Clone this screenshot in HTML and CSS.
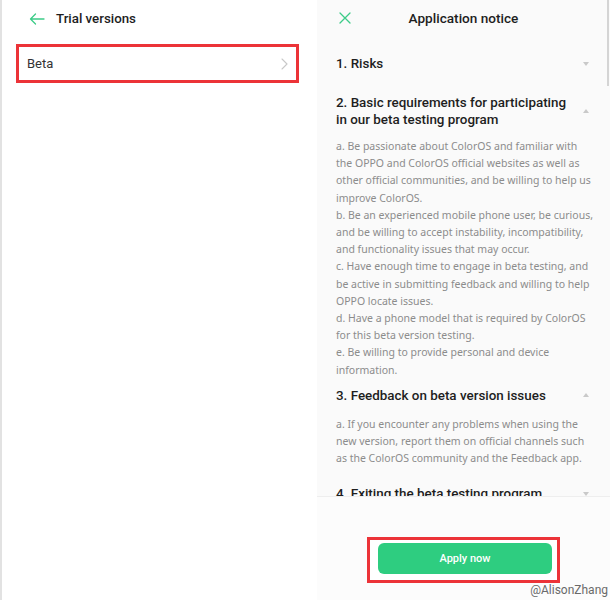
FILE: index.html
```html
<!DOCTYPE html>
<html lang="en">
<head>
    <meta charset="UTF-8">
    <meta name="viewport" content="width=device-width, initial-scale=1.0">
    <title>Trial versions</title>
    <link rel="stylesheet" href="styles.css">
</head>
<body>
    <div class="screens">
        <!-- Left screen: trial versions list -->
        <section class="screen screen-list">
            <header class="list-header">
                <svg class="back-icon" width="16" height="12" viewBox="0 0 16 12">
                    <path d="M15 6H1.5M6.5 1L1.5 6l5 5" fill="none" stroke="#3ccb88" stroke-width="1.3" stroke-linecap="round" stroke-linejoin="round"/>
                </svg>
                <h1>Trial versions</h1>
            </header>

            <div class="mark">
                <div class="list-row">
                    <span>Beta</span>
                    <svg width="7" height="12" viewBox="0 0 7 12">
                        <path d="M1 1l5 5-5 5" fill="none" stroke="#c8c8c8" stroke-width="1.1" stroke-linecap="round" stroke-linejoin="round"/>
                    </svg>
                </div>
            </div>
        </section>

        <!-- Right screen: application notice -->
        <section class="screen screen-notice">
            <header class="notice-header">
                <span class="close-cell">
                    <svg width="12" height="12" viewBox="0 0 12 12">
                        <path d="M1 1l10 10M11 1L1 11" fill="none" stroke="#3ccb88" stroke-width="1.3" stroke-linecap="round"/>
                    </svg>
                </span>
                <h2>Application notice</h2>
                <span></span>
            </header>

            <div class="notice-body">
                <div class="item item-risks">
                    <div class="item-head">
                        <span>1. Risks</span>
                        <i class="caret caret-down"></i>
                    </div>
                </div>

                <div class="item item-basic">
                    <div class="item-head">
                        <span>2. Basic requirements for participating in our beta testing program</span>
                        <i class="caret caret-up"></i>
                    </div>
                    <p class="item-text">
                        a. Be passionate about ColorOS and familiar with the OPPO and ColorOS official websites as well as other official communities, and be willing to help us improve ColorOS.<br>
                        b. Be an experienced mobile phone user, be curious, and be willing to accept instability, incompatibility, and functionality issues that may occur.<br>
                        c. Have enough time to engage in beta testing, and be active in submitting feedback and willing to help OPPO locate issues.<br>
                        d. Have a phone model that is required by ColorOS for this beta version testing.<br>
                        e. Be willing to provide personal and device information.
                    </p>
                </div>

                <div class="item item-feedback">
                    <div class="item-head">
                        <span>3. Feedback on beta version issues</span>
                        <i class="caret caret-up"></i>
                    </div>
                    <p class="item-text">
                        a. If you encounter any problems when using the new version, report them on official channels such as the ColorOS community and the Feedback app.
                    </p>
                </div>

                <div class="item">
                    <div class="item-head">
                        <span>4. Exiting the beta testing program</span>
                        <i class="caret caret-down"></i>
                    </div>
                </div>
            </div>

            <footer class="notice-footer">
                <div class="mark mark-button">
                    <button class="apply-btn">Apply now</button>
                </div>
            </footer>

            <div class="scroll-thumb"></div>
            <div class="watermark">@AlisonZhang</div>
        </section>
    </div>
</body>
</html>
```

FILE: styles.css
```css
* {
    margin: 0;
    padding: 0;
    box-sizing: border-box;
}

body {
    font-family: Roboto, 'Noto Sans', sans-serif;
    background: #ffffff;
    color: #222222;
    width: 610px;
    height: 600px;
    overflow: hidden;
}

.screens {
    display: flex;
    height: 600px;
}

.screen {
    height: 600px;
}

/* left screen */
.screen-list {
    width: 317px;
    background: #ffffff;
    border-left: 2px solid #e2e2e2;
}

.list-header {
    height: 37px;
    display: flex;
    align-items: center;
    gap: 11px;
    padding-left: 27px;
}

.list-header h1 {
    font-size: 13.3px;
    font-weight: 500;
    color: #1e1e1e;
}

.mark {
    border: 3px solid #ec3338;
}

.screen-list .mark {
    margin: 7px 18px 0 14px;
}

.list-row {
    height: 33px;
    display: flex;
    align-items: center;
    justify-content: space-between;
    padding: 0 8px 0 8px;
    font-size: 13px;
    color: #333333;
}

/* right screen */
.screen-notice {
    flex: 1;
    position: relative;
    display: flex;
    flex-direction: column;
    background: #fafafa;
}

.notice-header {
    height: 36px;
    display: grid;
    grid-template-columns: 1fr auto 1fr;
    align-items: center;
    flex-shrink: 0;
}

.close-cell {
    display: flex;
    padding-left: 22px;
}

.notice-header h2 {
    font-size: 13.6px;
    font-weight: 500;
    color: #1e1e1e;
}

.notice-body {
    flex: 1;
    overflow: hidden;
    padding: 11px 14px 0 19px;
}

.item-head {
    display: flex;
    justify-content: space-between;
    align-items: center;
    padding: 8px 0;
    font-size: 13.4px;
    font-weight: 500;
    line-height: 17px;
    color: #1e1e1e;
}

.item-head span {
    max-width: 236px;
}

.item-risks {
    margin-bottom: 6px;
}

.item-text {
    font-family: 'Noto Sans', Roboto, sans-serif;
    font-size: 10.5px;
    line-height: 17.2px;
    color: #8c8c8c;
    padding-top: 2px;
}

.item-feedback .item-text {
    padding-top: 4px;
    padding-bottom: 10px;
}

.caret {
    width: 0;
    height: 0;
    border-left: 3.5px solid transparent;
    border-right: 3.5px solid transparent;
    margin-right: 7px;
}

.caret-down {
    border-top: 4px solid #c9c9c9;
}

.caret-up {
    border-bottom: 4px solid #c9c9c9;
}

.notice-footer {
    height: 104px;
    flex-shrink: 0;
    border-top: 1px solid #eeeeee;
    background: #fcfcfc;
    display: flex;
    justify-content: center;
    padding-top: 40px;
}

.mark-button {
    height: 46px;
    padding: 3px 5px 6px 8px;
    background: #ffffff;
}

.apply-btn {
    width: 174px;
    height: 31px;
    border: none;
    border-radius: 6px;
    background: #2ecd80;
    color: #ffffff;
    font-family: Roboto, 'Noto Sans', sans-serif;
    font-size: 11px;
    font-weight: 500;
}

.scroll-thumb {
    position: absolute;
    right: 1px;
    top: 0;
    width: 2px;
    height: 86px;
    background: #d4d4d4;
}

.watermark {
    position: absolute;
    right: 2px;
    bottom: 3px;
    font-size: 12px;
    color: #6a6a6a;
    text-shadow: 0 0 2px #ffffff;
}
```
